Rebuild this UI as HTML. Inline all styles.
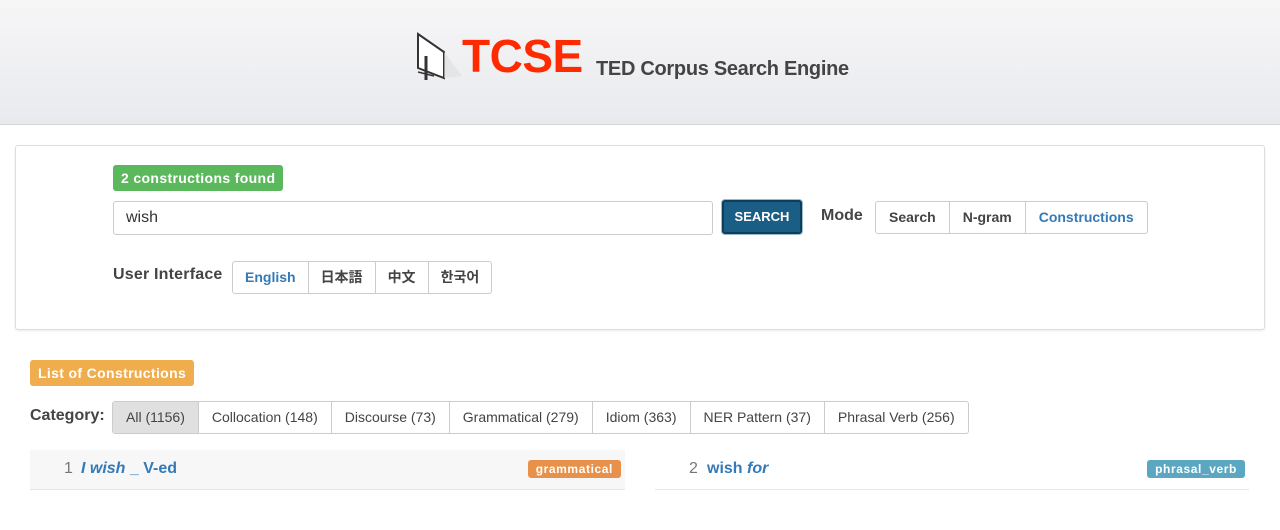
<!DOCTYPE html>
<html><head><meta charset="utf-8"><style>
*{box-sizing:border-box}
body{margin:0;width:1280px;height:530px;overflow:hidden;background:#fff;font-family:"Liberation Sans","Noto Sans CJK KR",sans-serif;font-size:14px;color:#333}
.hdr{height:125px;background:linear-gradient(#f6f6f7,#e9eaee);border-bottom:1px solid #d4d4d4;position:relative}
.panel{position:absolute;left:15px;top:145px;width:1250px;height:185px;border:1px solid #ddd;border-radius:3px;box-shadow:0 1px 2px rgba(0,0,0,.08)}
.lbl{position:absolute;color:#fff;font-weight:bold;border-radius:3px;font-size:14px;padding:0 8px;line-height:26px;letter-spacing:.35px}
.btn{position:absolute;border:1px solid #ccc;background:#fff;font-size:14px;display:flex;border-radius:3px;overflow:hidden}
.btn span{padding:0 13px;border-right:1px solid #ccc;line-height:31px;font-weight:bold;color:#444}
.btn span:last-child{border-right:none}
.a{color:#337ab7!important}
.row{position:absolute;height:40px;border-bottom:1px solid #e6e6e6;font-size:16px}
.tag{position:absolute;top:10px;right:4px;color:#fff;font-size:12px;font-weight:bold;padding:0 8px;line-height:18px;border-radius:3px;letter-spacing:.6px}
</style></head><body>
<div class="hdr">
<svg style="position:absolute;left:414px;top:32px" width="50" height="50"><polygon points="4,2 30,20 30,46 4,36" fill="#fff" stroke="#333" stroke-width="2"/><polygon points="30,20 30,46 48,44" fill="#ddd" opacity=".6"/><line x1="12" y1="24" x2="12" y2="48" stroke="#333" stroke-width="3"/><line x1="4" y1="40" x2="20" y2="44" stroke="#333" stroke-width="1.5"/></svg>
<div style="position:absolute;left:462px;top:28px;font-size:46px;font-weight:bold;color:#ff2a00;letter-spacing:-0.5px;line-height:56px">TCSE</div>
<div style="position:absolute;left:596px;top:56px;font-size:20px;font-weight:bold;color:#444;line-height:26px;letter-spacing:-0.3px">TED Corpus Search Engine</div>
</div>
<div class="panel">
<div class="lbl" style="left:97px;top:19px;background:#5cb85c">2 constructions found</div>
<div style="position:absolute;left:97px;top:55px;width:600px;height:34px;border:1px solid #ccc;border-radius:3px;padding:7px 12px;font-size:16px">wish</div>
<div style="position:absolute;left:706px;top:54px;width:80px;height:34px;background:#1b5e85;border:2px solid #0d3e5c;border-radius:3px;color:#fff;font-weight:bold;font-size:13px;text-align:center;line-height:30px;box-shadow:0 0 0 1px #9bc">SEARCH</div>
<div style="position:absolute;left:805px;top:61px;font-weight:bold;font-size:16px;color:#444">Mode</div>
<div class="btn" style="left:859px;top:55px"><span>Search</span><span>N-gram</span><span class="a">Constructions</span></div>
<div style="position:absolute;left:97px;top:120px;font-weight:bold;font-size:16px;color:#444;letter-spacing:.2px">User Interface</div>
<div class="btn" style="left:216px;top:115px"><span class="a" style="padding:0 12px">English</span><span style="padding:0 12px">日本語</span><span style="padding:0 12px">中文</span><span style="padding:0 12px">한국어</span></div>
</div>
<div class="lbl" style="left:30px;top:360px;background:#f0ad4e">List of Constructions</div>
<div style="position:absolute;left:30px;top:407px;font-weight:bold;font-size:16px;color:#444">Category:</div>
<div class="btn" style="left:112px;top:401px"><span style="background:#e0e0e0;font-weight:normal">All (1156)</span><span style="font-weight:normal">Collocation (148)</span><span style="font-weight:normal">Discourse (73)</span><span style="font-weight:normal">Grammatical (279)</span><span style="font-weight:normal">Idiom (363)</span><span style="font-weight:normal">NER Pattern (37)</span><span style="font-weight:normal">Phrasal Verb (256)</span></div>
<div class="row" style="left:30px;top:450px;width:595px;background:#f7f7f7"><span style="position:absolute;left:34px;top:10px;color:#777">1</span><span style="position:absolute;left:51px;top:10px;color:#337ab7;font-weight:bold"><i>I wish</i> _ V-ed</span><span class="tag" style="background:#e8914a">grammatical</span></div>
<div class="row" style="left:655px;top:450px;width:594px"><span style="position:absolute;left:34px;top:10px;color:#777">2</span><span style="position:absolute;left:52px;top:10px;color:#337ab7;font-weight:bold">wish <i>for</i></span><span class="tag" style="background:#5ba7c2">phrasal_verb</span></div>
</body></html>
